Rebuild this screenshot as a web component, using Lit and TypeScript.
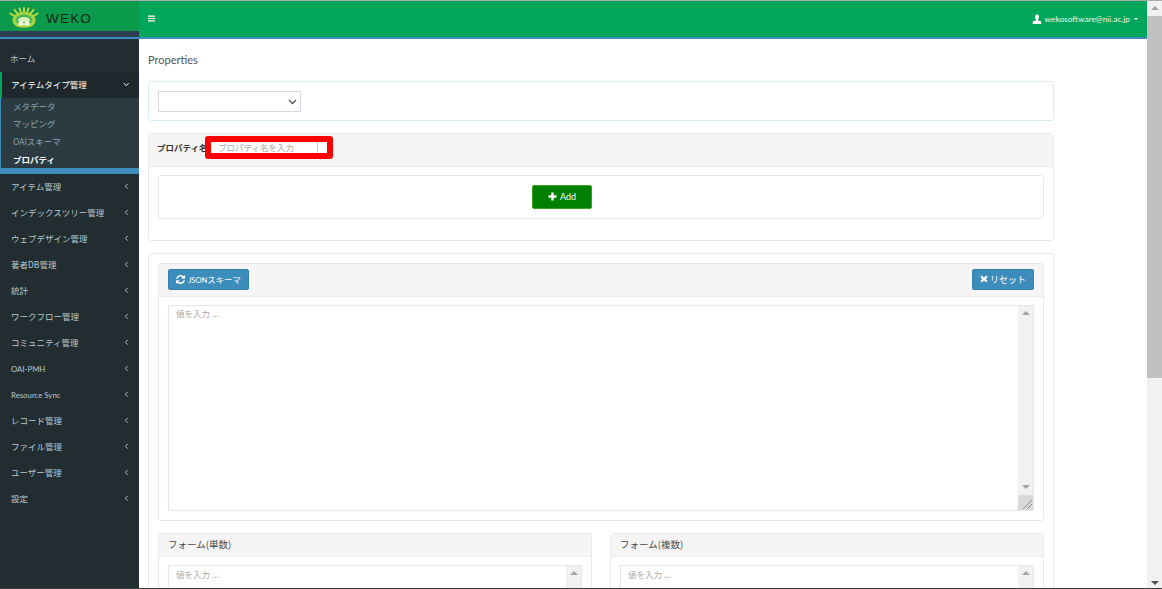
import { LitElement, html, css, svg } from "lit";
import { customElement } from "lit/decorators.js";

const CJK = `"Noto Sans CJK JP", "Open Sans", sans-serif`;
const cjk = css([CJK] as any as TemplateStringsArray);
const REFRESH = "M1511 928q0 5-1 7-64 268-268 434.5t-478 166.5q-146 0-282.5-55t-243.5-157l-129 129q-19 19-45 19t-45-19-19-45v-448q0-26 19-45t45-19h448q26 0 45 19t19 45-19 45l-137 137q71 66 161 102t187 36q134 0 250-65t186-179q11-17 53-117 8-23 30-23h192q13 0 22.5 9.5t9.5 22.5zm25-800v448q0 26-19 45t-45 19h-448q-26 0-45-19t-19-45 19-45l138-138q-148-137-349-137-134 0-250 65t-186 179q-11 17-53 117-8 23-30 23h-199q-13 0-22.5-9.5t-9.5-22.5v-7q65-268 270-434.5t480-166.5q146 0 284 55.5t245 156.5l130-129q19-19 45-19t45 19 19 45z";

const NAV_TOP = ["アイテム管理", "インデックスツリー管理", "ウェブデザイン管理", "著者DB管理", "統計", "ワークフロー管理", "コミュニティ管理", "OAI-PMH", "Resource Sync", "レコード管理", "ファイル管理", "ユーザー管理", "設定"];
const SUB = ["メタデータ", "マッピング", "OAIスキーマ", "プロパティ"];

const chevLeft = svg`<svg class="chev" viewBox="0 0 6 8" width="5" height="6.500"><path d="M4.600 1 1.600 4l3 3" fill="none" stroke="currentColor" stroke-width="1.200"/></svg>`;
const chevDown = svg`<svg class="chev" viewBox="0 0 8 6" width="6.500" height="5"><path d="M1 1.400l3 3 3-3" fill="none" stroke="currentColor" stroke-width="1.200"/></svg>`;

@customElement("app-root")
export class AppRoot extends LitElement {
  static styles = css`
    :host { display: block; width: 1162px; height: 589px; overflow: hidden; font-family: "Lato", ${cjk}; background: #fff; }
    * { box-sizing: border-box; }
    .frame { height: 589px; display: flex; flex-direction: column; }
    .topline { height: 1px; background: #a9aca9; flex: none; }
    .botline { height: 1px; background: #3d3d3d; flex: none; }
    .mid { flex: 1; min-height: 0; display: flex; }
    .page { flex: 1; min-width: 0; display: flex; flex-direction: column; }
    .header { flex: none; height: 38px; display: flex; border-bottom: 2px solid #3c8dbc; background: #00a65a; }
    .brand { width: 139px; flex: none; display: flex; flex-direction: column; background: #2c3e50; }
    .logo { height: 30px; background: #0b9a4c; display: flex; align-items: center; padding: 4px 0 0 9px; gap: 7px; color: #10241a; font: 400 13.500px "Liberation Sans", sans-serif; letter-spacing: 1.200px; }
    .topbar { flex: 1; display: flex; align-items: center; justify-content: space-between; padding: 0 9px 2px 9px; color: #fff; }
    .burger { display: block; }
    .user { display: flex; align-items: center; gap: 3px; font: 400 8.300px "Lato", sans-serif; color: #e8f8ef; margin-top: 1px; }
    .caret { width: 0; height: 0; border: 2.500px solid transparent; border-top-color: #fff; border-bottom: 0; margin-left: 1px; }
    .body { flex: 1; min-height: 0; display: flex; }

    .side { width: 139px; flex: none; background: #222d32; padding-top: 7px; color: #b8c7ce; font-size: 8.500px; font-family: ${cjk}; }
    .item { height: 26px; display: flex; align-items: center; justify-content: space-between; padding: 0 10px 2px 11px; }
    .item.home { padding-left: 10px; }
    .item .chev { flex: none; }
    .item.active { background: #1e282c; color: #fff; border-left: 2px solid #00a65a; padding-left: 9px; }
    .item.latin { font-family: "Lato", sans-serif; font-size: 7.800px; font-weight: 400; padding-bottom: 0; }
    .item.latin .chev { margin-top: -2px; }
    .subnav { background: #2c3b41; height: 70px; border-left: 1px solid #3c8dbc; padding: 0 0 0 12px; color: #8aa4af; font-size: 8.500px; display: flex; flex-direction: column; justify-content: center; }
    .subnav div { height: 17.700px; line-height: 17.700px; }
    .subnav .cur { color: #fff; font-weight: 700; }
    .band { height: 6px; background: #3c8dbc; }

    .main { flex: 1; min-width: 0; overflow: hidden; padding: 14px 93px 0 9px; color: #555; font-size: 10px; font-family: ${cjk}; }
    .title { font: 400 11px/14px "Lato", sans-serif; color: #555; margin: 0 0 14px; }
    .panel { border: 1px solid #e9e9e9; border-radius: 3px; background: #fff; }
    .p-select { height: 40px; border-color: #d9edf7; padding: 9px; margin-bottom: 12px; }
    .select-box { position: relative; width: 143px; height: 21px; }
    select { display: block; appearance: none; width: 100%; height: 100%; border: 1px solid #d8d8e4; background: #fff; border-radius: 0; padding: 0 4px; color: #333; font-size: 9px; }
    .select-box svg { position: absolute; right: 4px; top: 7.500px; pointer-events: none; }
    .p-prop { height: 108px; margin-bottom: 12px; }
    .head { background: #f5f5f5; border-bottom: 1px solid #ececec; }
    .prop-head { height: 33px; display: flex; align-items: center; padding: 0 0 6px 8px; color: #333; font-weight: 700; font-size: 8.500px; }
    .prop-label { width: 48px; white-space: nowrap; flex: none; }
    .highlight { position: relative; z-index: 1; flex: none; display: block; width: 128px; height: 23px; border: 6px solid #f00; border-radius: 3px; background: #fff; }
    .highlight input { display: block; width: 107px; height: 11px; border: 0; border-right: 1px solid #ccc; outline: none; padding: 0 0 0 7px; margin: 0; font: 400 8.500px ${cjk}; background: #fff; }
    ::placeholder { color: #aaa; opacity: 1; }
    .add-wrap { margin: 8px 9px 0; height: 44px; display: flex; justify-content: flex-start; padding: 9px 0 0 373px; }
    .btn { display: inline-flex; align-items: center; justify-content: center; border-radius: 2px; color: #fff; border: 1px solid #367fa9; background: #3c8dbc; font-size: 8.400px; height: 21px; gap: 3px; padding: 0; font-family: ${cjk}; }
    .btn.add { width: 60px; height: 23.500px; background: #008000; border-color: #3f9f1f; font: 400 9px "Lato", sans-serif; }
    .btn.json { width: 81px; }
    .btn.reset { width: 62px; font-size: 9px; gap: 2px; }
    .btn small { font-size: 7.600px; font-family: "Lato", sans-serif; }
    .p-editors { padding: 9px 9px 0; height: 400px; }
    .schema { height: 258px; margin-bottom: 12px; }
    .schema-head { height: 33px; display: flex; align-items: center; justify-content: space-between; padding: 0 9px 2px; }
    .ta { position: relative; display: flex; border: 1px solid #e6e6ee; background: #fff; }
    .schema .ta { margin: 8px 9px 0; height: 206px; }
    textarea { flex: 1; min-width: 0; border: 0; outline: none; resize: none; overflow: hidden; padding: 2px 7px; font: 400 8.500px/12px ${cjk}; background: transparent; }
    .schema textarea { padding-top: 1px; }
    .sb { width: 15px; flex: none; background: #f1f1f1; display: flex; flex-direction: column; align-items: center; }
    .arrow-up, .arrow-down { width: 0; height: 0; border: 4px solid transparent; flex: none; }
    .arrow-up { border-top: 0; border-bottom: 4.500px solid #a3a3a3; margin-top: 5px; }
    .arrow-down { border-bottom: 0; border-top: 4.500px solid #a3a3a3; }
    .ta .sb .spacer { flex: 1; }
    .ta .sb .arrow-down { margin-bottom: 6px; }
    .grip { width: 15px; height: 15px; background: #d9d9d9; flex: none; display: block; }
    .forms { display: grid; grid-template-columns: 434px 434px; gap: 18px; }
    .fhead { height: 23px; padding-left: 9px; line-height: 21px; font-size: 9.500px; color: #444; }
    .forms .ta { margin: 8px 9px 0; height: 70px; }

    .vsb { width: 15px; flex: none; background: #f1f1f1; display: flex; flex-direction: column; align-items: center; position: relative; }
    .thumb { position: absolute; left: 0; top: 15px; width: 100%; height: 362px; background: #c1c1c1; }
    .vsb .spacer { flex: 1; }
    .vsb .arrow-down { border-top-color: #505050; margin-bottom: 3px; }
  `;

  private ta() {
    return html`<div class="ta"><textarea placeholder="値を入力 ..."></textarea>
      <div class="sb"><div class="arrow-up"></div><div class="spacer"></div></div></div>`;
  }

  render() {
    return html`<div class="frame">
      <div class="topline"></div>
      <div class="mid">
        <div class="page">
          <header class="header">
            <div class="brand">
              <div class="logo">
                <svg width="30" height="22" viewBox="0 0 30 22" aria-hidden="true">
                  <g stroke="#c4df45" stroke-width="1.800" stroke-linecap="round">
                    <path d="M15 .9v4.600M10.500 1.300l1.400 4.300M19.500 1.300l-1.400 4.300M5.500 2.800l3 3.800M24.500 2.800l-3 3.800M1.200 6.500l4.500 2.500M28.800 6.500l-4.500 2.500"/>
                  </g>
                  <path d="M3.500 12.500a11.500 7.500 0 0 1 23 0q0 5-4 7-7.500 2.500-15 0-4-2-4-7z" fill="#a9d33c"/>
                  <path d="M6.500 13a8.500 5.500 0 0 1 17 0l-1 3h-15z" fill="#4db85a"/>
                  <path d="M9 13.500a6 3.600 0 0 1 12 0l-1 1.500h-10z" fill="#d8efb5"/>
                  <path d="M9.500 18.500v-2q0-2 2.700-2 2.300 0 2.300 2v2zM15.500 18.500v-2q0-2 2.300-2 2.700 0 2.700 2v2z" fill="#f6f9ee"/>
                </svg>
                <span>WEKO</span>
              </div>
            </div>
            <div class="topbar">
              <svg class="burger" width="7" height="7" viewBox="0 0 7 7" aria-hidden="true"><path d="M0 .5h7v1.200H0zM0 2.900h7v1.200H0zM0 5.300h7v1.200H0z" fill="#fff"/></svg>
              <div class="user">
                <svg width="10" height="10" viewBox="0 0 10 10" aria-hidden="true"><path d="M3 2.800a2 2.500 0 0 1 4 0c0 1.500-.6 2.400-1 2.900v.6l3.300 1.300V10H.7V7.600L4 6.300v-.6c-.4-.5-1-1.400-1-2.900z" fill="#fff"/></svg>
                <span>wekosoftware@nii.ac.jp</span>
                <span class="caret"></span>
              </div>
            </div>
          </header>
          <div class="body">
            <nav class="side">
              <div class="item home">ホーム</div>
              <div class="item active">アイテムタイプ管理 ${chevDown}</div>
              <div class="subnav">
                ${SUB.map((s, i) => html`<div class=${i === 3 ? "cur" : ""}>${s}</div>`)}
              </div>
              <div class="band"></div>
              ${NAV_TOP.map((n) => html`<div class="item ${/^[A-Za-z]/.test(n) ? "latin" : ""}">${n} ${chevLeft}</div>`)}
            </nav>
            <main class="main">
              <div class="title">Properties</div>
              <section class="panel p-select">
                <div class="select-box">
                  <select aria-label="property"><option></option></select>
                  <svg width="9" height="6" viewBox="0 0 9 6" aria-hidden="true"><path d="M1 1l3.500 3.500L8 1" fill="none" stroke="#555" stroke-width="1.300"/></svg>
                </div>
              </section>
              <section class="panel p-prop">
                <div class="head prop-head">
                  <span class="prop-label">プロパティ名</span>
                  <label class="highlight"><input placeholder="プロパティ名を入力" /></label>
                </div>
                <div class="panel add-wrap">
                  <button class="btn add">
                    <svg width="9" height="9" viewBox="0 0 9 9" aria-hidden="true"><path d="M3.300.5h2.400v2.800h2.800v2.400H5.700v2.800H3.300V5.700H.5V3.300h2.800z" fill="#fff"/></svg>
                    Add
                  </button>
                </div>
              </section>
              <section class="panel p-editors">
                <div class="panel schema">
                  <div class="head schema-head">
                    <button class="btn json">
                      <svg width="9" height="9" viewBox="0 0 1536 1536" aria-hidden="true"><path d=${REFRESH} fill="#fff"/></svg>
                      <span><small>JSON</small>スキーマ</span>
                    </button>
                    <button class="btn reset">
                      <svg width="8" height="8" viewBox="0 0 8 8" aria-hidden="true"><path d="M1.800.5 4 2.500 6.200.5 7.700 2 5.700 4l2 2-1.500 1.500L4 5.500 1.800 7.500.3 6l2-2-2-2z" fill="#fff"/></svg>
                      リセット
                    </button>
                  </div>
                  <div class="ta"><textarea placeholder="値を入力 ..."></textarea>
                    <div class="sb">
                      <div class="arrow-up"></div><div class="spacer"></div><div class="arrow-down"></div>
                      <svg class="grip" viewBox="0 0 15 15" aria-hidden="true"><path d="M5 14 14 5M9 14l5-5" stroke="#8c8c8c" stroke-width="1"/></svg>
                    </div>
                  </div>
                </div>
                <div class="forms">
                  <div class="panel"><div class="head fhead">フォーム(単数)</div>${this.ta()}</div>
                  <div class="panel"><div class="head fhead">フォーム(複数)</div>${this.ta()}</div>
                </div>
              </section>
            </main>
          </div>
        </div>
        <div class="vsb">
          <div class="arrow-up"></div><div class="thumb"></div><div class="spacer"></div><div class="arrow-down"></div>
        </div>
      </div>
      <div class="botline"></div>
    </div>`;
  }
}
